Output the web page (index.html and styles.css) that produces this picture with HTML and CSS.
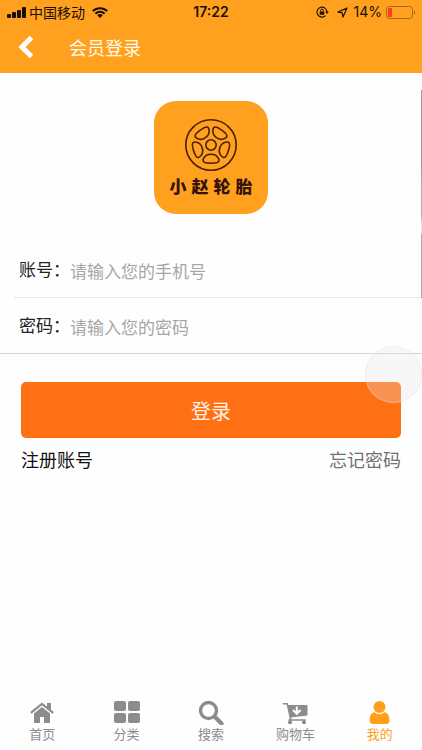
FILE: index.html
```html
<!DOCTYPE html>
<html lang="zh-CN">
<head>
<meta charset="utf-8">
<meta name="viewport" content="width=device-width, initial-scale=1">
<title>会员登录</title>
<link rel="stylesheet" href="styles.css">
</head>
<body>
<div class="app">
  <header class="top">
    <div class="status">
      <div class="status-side">
        <svg width="19" height="11" viewBox="0 0 19 11" aria-hidden="true"><rect x="0" y="7" width="4" height="4" rx="1"/><rect x="5" y="5" width="4" height="6" rx="1"/><rect x="10" y="3" width="4" height="8" rx="1"/><rect x="15" y="0" width="4" height="11" rx="1"/></svg>
        <span class="carrier">中国移动</span>
        <svg class="wifi" width="16" height="11" viewBox="0 0 16 11" aria-hidden="true"><g fill="none" stroke="#1a1000" stroke-width="2"><path d="M.8 4.100a10.300 10.300 0 0 1 14.400 0"/><path d="M3.400 6.700a6.600 6.600 0 0 1 9.200 0"/></g><path d="M8 11 5.300 8.300a3.900 3.900 0 0 1 5.400 0Z"/></svg>
      </div>
      <span class="time">17:22</span>
      <div class="status-side status-right">
        <svg width="13" height="12" viewBox="0 0 13 12" aria-hidden="true"><path d="M9.500 9.700A5 5 0 1 1 11 6" fill="none" stroke="#1a1000" stroke-width="1.100"/><path d="M9.200 5.500h3.600L11 8ZM3.700 5.500h4.600v3.300H3.700Z"/><path d="M4.700 5.700V4.400a1.300 1.300 0 0 1 2.600 0v1.300" fill="none" stroke="#1a1000"/></svg>
        <svg class="locate" width="11" height="11" viewBox="0 0 11 11" aria-hidden="true"><path d="M10 1 .9 5.100 5.200 5.800 6 10.100Z" fill="none" stroke="#1a1000" stroke-width="1.200" stroke-linejoin="round"/></svg>
        <span class="percent">14%</span>
        <svg width="29" height="13" viewBox="0 0 29 13" aria-hidden="true"><rect x=".5" y=".5" width="26" height="12" rx="3" fill="none" stroke="#a66a17"/><rect x="2" y="2" width="4" height="9" rx="1" fill="#ff3b24"/><path d="M28 4.500c1.300.6 1.300 3.400 0 4Z" fill="#8a5712"/></svg>
      </div>
    </div>
    <div class="nav">
      <button class="back" type="button" aria-label="返回"><svg width="17" height="24" viewBox="0 0 17 24" aria-hidden="true"><path d="M13.500 2.500 4 12l9.500 9.500" fill="none" stroke="#fff" stroke-width="5"/></svg></button>
      <h1 class="title">会员登录</h1>
    </div>
  </header>

  <main class="content">
    <div class="intro">
      <div class="logo">
        <svg width="54" height="54" viewBox="0 0 54 54" fill="none" stroke="#4a2005" stroke-width="1.600" aria-hidden="true">
          <circle cx="27" cy="27" r="25.200"/><circle cx="27" cy="27" r="5.200"/>
          <path id="hole" d="M24 36.600c2-.5 4-.5 6 0 2.600.8 5 3.800 5 6 0 3.600-16 3.600-16 0 0-2.200 2.400-5.200 5-6Z"/>
          <use href="#hole" transform="rotate(72 27 27)"/><use href="#hole" transform="rotate(144 27 27)"/><use href="#hole" transform="rotate(216 27 27)"/><use href="#hole" transform="rotate(288 27 27)"/>
        </svg>
        <div class="brand"><span>小</span><span>赵</span><span>轮</span><span>胎</span></div>
      </div>
    </div>
    <form class="form">
      <div class="field field-first">
        <label for="account">账号：</label>
        <input id="account" type="tel" placeholder="请输入您的手机号">
      </div>
      <div class="field">
        <label for="password">密码：</label>
        <input id="password" type="password" placeholder="请输入您的密码">
      </div>
      <div class="actions">
        <button class="submit" type="submit">登录</button>
        <div class="links"><a class="register" href="#register">注册账号</a><a class="forgot" href="#forgot">忘记密码</a></div>
      </div>
    </form>
    <div class="edge"></div>
    <div class="touch"></div>
  </main>

  <nav class="tabs">
    <a class="tab" href="#home"><svg width="26" height="26" viewBox="0 0 26 26" aria-hidden="true"><path d="M13 8 21 14.500V23a1 1 0 0 1-1 1h-5v-6h-4v6H6a1 1 0 0 1-1-1v-8.500Z"/><path d="M1.800 13.800 13 4.800l11.200 9" fill="none" stroke="currentColor" stroke-width="2.200"/><path d="M18 4h4v7l-4-3.200Z"/></svg><span>首页</span></a>
    <a class="tab" href="#category"><svg width="26" height="26" viewBox="0 0 26 26" aria-hidden="true"><rect x="0" y="2" width="12" height="10" rx="2"/><rect x="14" y="2" width="12" height="10" rx="2"/><rect x="0" y="14" width="12" height="10" rx="2"/><rect x="14" y="14" width="12" height="10" rx="2"/></svg><span>分类</span></a>
    <a class="tab" href="#search"><svg width="26" height="26" viewBox="0 0 26 26" fill="none" stroke="currentColor" aria-hidden="true"><circle cx="10.500" cy="11.500" r="8" stroke-width="3.400"/><path d="m16.500 17.500 7 7" stroke-width="4.200" stroke-linecap="round"/></svg><span>搜索</span></a>
    <a class="tab" href="#cart"><svg width="26" height="26" viewBox="0 0 26 26" aria-hidden="true"><path d="M.8 4.700h4.400l3.300 14.800M6.500 21h17" fill="none" stroke="currentColor" stroke-width="1.500"/><path d="M5.500 6h19a1 1 0 0 1 1 1v9.500L8.500 18.500Z"/><path d="M14.800 7.500v7M11 11l3.800 3.800 3.800-3.800" fill="none" stroke="#fff" stroke-width="2"/><path d="M8.500 18v3M22.500 20.500v2" stroke="currentColor" stroke-width="1.500"/><circle cx="8" cy="23.300" r="2"/><circle cx="22" cy="23.300" r="2"/></svg><span>购物车</span></a>
    <a class="tab tab-active" href="#mine"><svg width="26" height="26" viewBox="0 0 26 26" aria-hidden="true"><circle cx="12.500" cy="8" r="6"/><path d="M7.500 13.200a7.300 7.300 0 0 0 10 0c3.200.3 5 3.500 5 8.300 0 2.200-1 3.500-3 3.500H5.700c-2 0-3-1.300-3-3.500 0-4.800 1.600-8 4.800-8.300Z"/></svg><span>我的</span></a>
  </nav>
</div>
</body>
</html>
```

FILE: styles.css
```css
* {
  box-sizing: border-box;
}

body {
  margin: 0;
  background: #fefefe;
  color: #222;
  font-family: "Noto Sans CJK SC", sans-serif;
}

button,
input {
  font-family: inherit;
}

a {
  text-decoration: none;
}

svg {
  display: block;
  flex: none;
}

.app {
  display: flex;
  flex-direction: column;
  min-height: 100vh;
}

.top {
  background: #ffa11f;
}

.status {
  display: flex;
  align-items: center;
  height: 24px;
  padding: 0 7px;
  color: #1a1000;
  fill: #1a1000;
  font-size: 14px;
  line-height: 20px;
}

.status-side {
  display: flex;
  flex: 1;
  align-items: center;
  gap: 4px;
}

.status-right {
  justify-content: flex-end;
}

.carrier {
  margin-left: -1px;
}

.wifi {
  margin-left: 3px;
}

.locate {
  margin: 0 2px 0 4px;
}

.time,
.percent {
  font-family: Inter, sans-serif;
}

.time {
  font-weight: 600;
}

.nav {
  display: flex;
  align-items: center;
  height: 49px;
  padding: 0 18px 4px;
}

.back {
  padding: 0;
  border: 0;
  background: none;
}

.title {
  margin: 0 0 0 34px;
  color: #fff8e6;
  font-size: 18px;
  font-weight: 400;
  line-height: 24px;
}

.content {
  position: relative;
  flex: 1;
}

.intro {
  display: flex;
  justify-content: center;
  padding: 28px 0;
}

.logo {
  display: flex;
  flex-direction: column;
  align-items: center;
  gap: 2px;
  width: 114px;
  height: 113px;
  padding-top: 17px;
  border-radius: 22px;
  background: #ffa11f;
}

.brand {
  display: flex;
  gap: 5px;
  color: #35130a;
  font-size: 17px;
  font-weight: 900;
  line-height: 24px;
}

.field {
  display: flex;
  align-items: center;
  height: 56px;
  padding-left: 19px;
  border-bottom: 1px solid #d4d4d4;
}

.field-first {
  margin-left: 14px;
  padding-left: 5px;
  border-color: #e6e6e6;
}

.field label {
  width: 51px;
  padding-bottom: 2px;
  font-size: 17px;
  line-height: 24px;
  white-space: nowrap;
}

.field input {
  flex: 1;
  min-width: 0;
  padding: 2px 0 0;
  border: 0;
  outline: 0;
  background: none;
  color: #222;
  font-size: 17px;
  line-height: 24px;
}

.field input::placeholder {
  color: #a6a6a6;
}

.actions {
  padding: 28px 21px 0;
}

.submit {
  display: block;
  width: 100%;
  height: 56px;
  border: 0;
  border-radius: 5px;
  background: #ff6f14;
  color: #fff3e6;
  font-size: 20px;
}

.links {
  display: flex;
  justify-content: space-between;
  margin-top: 9px;
  font-size: 18px;
  line-height: 24px;
}

.register {
  color: #111;
}

.forgot {
  color: #707070;
}

/* Sliver of the next page along the right edge */
.edge {
  position: absolute;
  top: 17px;
  right: 0;
  width: 1px;
  height: 208px;
  background: linear-gradient(#999 0 35%, #c9a3a0 45% 60%, #fbe3cf 64% 68%, #aaa 70%);
}

/* Floating assistive touch button */
.touch {
  position: absolute;
  top: 273px;
  right: 0;
  width: 57px;
  height: 57px;
  border: 1px solid rgba(225, 225, 225, 0.4);
  border-radius: 50%;
  background: rgba(232, 232, 232, 0.3);
}

.tabs {
  display: flex;
  padding: 0 0 7px;
}

.tab {
  display: flex;
  flex: 1;
  flex-direction: column;
  align-items: center;
  color: #8c8c8c;
  fill: currentColor;
  font-size: 13px;
  line-height: 18px;
}

.tab-active {
  color: #ff9f1a;
}
```
